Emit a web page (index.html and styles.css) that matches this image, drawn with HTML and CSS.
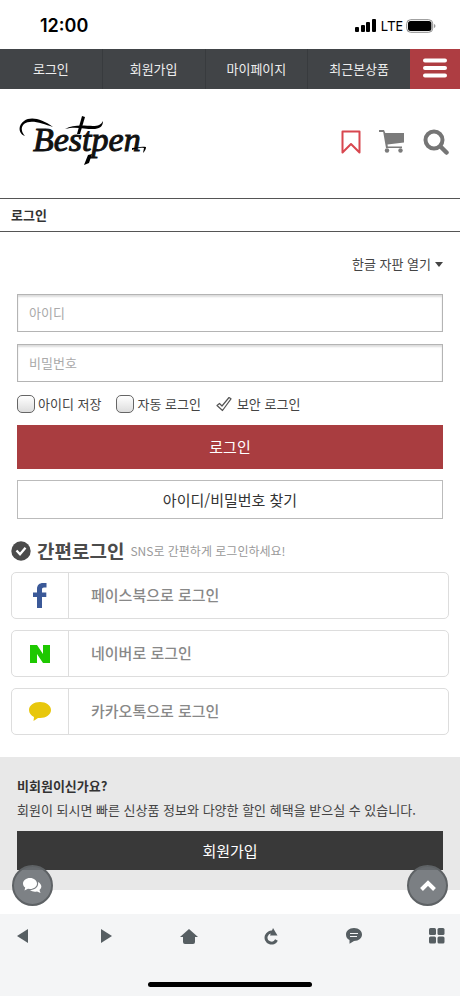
FILE: index.html
```html
<!DOCTYPE html>
<html lang="ko">
<head>
<meta charset="utf-8">
<meta name="viewport" content="width=device-width, initial-scale=1">
<title>로그인</title>
<link rel="stylesheet" href="styles.css">
</head>
<body>
<div class="status">
  <span class="clock">12:00</span>
  <div class="signal">
    <svg width="22" height="14" viewBox="0 0 22 14"><rect x="0" y="8" width="4" height="5" rx="1"/><rect x="6" y="6" width="4" height="7" rx="1"/><rect x="11" y="3" width="4" height="10" rx="1"/><rect x="17" y="0" width="4" height="13" rx="1"/></svg>
    <span>LTE</span>
    <svg width="30" height="14" viewBox="0 0 30 14"><rect x=".7" y=".7" width="26" height="12.600" rx="4" fill="none" stroke="#8c8c8c"/><rect x="2" y="2" width="23.400" height="10" rx="2.500"/><path d="M28 5v4q1.500-.5 1.500-2T28 5z" fill="#999"/></svg>
  </div>
</div>
<nav class="topnav">
  <a href="#">로그인</a><a href="#">회원가입</a><a href="#">마이페이지</a><a href="#">최근본상품</a>
  <button class="menu" aria-label="메뉴"><svg width="24" height="20" viewBox="0 0 24 20"><path d="M2 2.500h20M2 10h20M2 17.500h20" stroke="#fff" stroke-width="4" stroke-linecap="round"/></svg></button>
</nav>
<header class="header">
  <a class="logo" href="#" aria-label="Bestpen">
    <svg width="130" height="54" viewBox="0 0 130 54">
      <text x="15" y="36" class="logo-text">Bestpen</text>
      <path d="M7 21C1 19-1 11 6 6c7-5 18-2 29 6C24 8 12 4 6 9c-4 4-2 9 1 12z"/>
      <path d="M47 14c9-5 20-3 28-3 5 0 8-1 10-5 0 6-4 8-10 8-9 0-18-3-28 0z"/>
      <path d="M64 1l3 1-5 17h-3z"/>
      <path d="M70 40l4-1-3 9-5 2z"/>
      <path d="M114 35c4-1 7-3 12-2l-1 5c2-2 3-4 3-6-6-1-9 1-14 1z"/>
    </svg>
  </a>
  <div class="tools">
    <a href="#" aria-label="찜"><svg width="20" height="24" viewBox="0 0 20 24"><path d="M1.500 1.500h17v21L10 14l-8.500 8.500z" fill="none" stroke="#d8474f" stroke-width="2" stroke-linejoin="round"/></svg></a>
    <a href="#" aria-label="장바구니"><svg width="26" height="23" viewBox="0 0 26 23" fill="#7b7b7b"><path d="M0 0h5l1.300 3H25v9.500L8.500 14.500l.3 2H23V18H7L4.200 2H0z"/><circle cx="8" cy="20.500" r="2.200"/><circle cx="21.500" cy="20.500" r="2.200"/></svg></a>
    <a href="#" aria-label="검색"><svg width="26" height="26" viewBox="0 0 26 26" fill="none" stroke="#757575"><circle cx="11" cy="11" r="8.500" stroke-width="4"/><path d="M17.500 17.500l6 6" stroke-width="4.500" stroke-linecap="round"/></svg></a>
  </div>
</header>
<h1 class="title">로그인</h1>
<main>
  <form class="login">
    <a class="keyboard" href="#">한글 자판 열기<svg width="8" height="5" viewBox="0 0 8 5"><path d="M0 0h8L4 5z" fill="#444"/></svg></a>
    <input class="field" type="text" placeholder="아이디" aria-label="아이디">
    <input class="field" type="password" placeholder="비밀번호" aria-label="비밀번호">
    <div class="options">
      <label><input type="checkbox">아이디 저장</label>
      <label><input type="checkbox">자동 로그인</label>
      <label class="secure"><input type="checkbox" checked><svg width="16" height="16" viewBox="0 0 16 16"><path d="M1 9.500l2.500-2L6 10l7-8.500 2 1.300L6.500 14.500z" fill="#fff" stroke="#555" stroke-width="1.200" stroke-linejoin="round"/></svg>보안 로그인</label>
    </div>
    <button class="btn primary" type="submit">로그인</button>
    <button class="btn find" type="button">아이디/비밀번호 찾기</button>
  </form>
  <section class="sns">
    <div class="sns-head">
      <svg width="20" height="20" viewBox="0 0 20 20"><circle cx="10" cy="10" r="9.700" fill="#4b4b4b"/><path d="M5.500 9.500l3.500 3.800 5.500-6.500" fill="none" stroke="#fff" stroke-width="2.300"/></svg>
      <h2>간편로그인</h2><p>SNS로 간편하게 로그인하세요!</p>
    </div>
    <a class="card" href="#"><span class="brand"><svg width="14" height="25" viewBox="0 0 14 25"><path d="M4 25V14H0V9.500h4V6c0-4 2.500-6 6-6h3.500v4.500H11c-1.500 0-2 .8-2 2v3h4.300V14H9v11z" fill="#3b5998"/></svg></span><span class="name">페이스북으로 로그인</span></a>
    <a class="card" href="#"><span class="brand"><svg width="20" height="18" viewBox="0 0 20 18"><path d="M0 0h7l6 9V0h7v18h-7L7 9v9H0z" fill="#1ec800"/></svg></span><span class="name">네이버로 로그인</span></a>
    <a class="card" href="#"><span class="brand"><svg width="22" height="19" viewBox="0 0 22 19"><path d="M11 0c6 0 11 3.500 11 8s-5 8-11 8l-2-.1L4.500 19l.5-4C2 13.500 0 11 0 8c0-4.500 5-8 11-8z" fill="#e8c70c"/></svg></span><span class="name">카카오톡으로 로그인</span></a>
  </section>
  <section class="join">
    <h3>비회원이신가요?</h3>
    <p>회원이 되시면 빠른 신상품 정보와 다양한 할인 혜택을 받으실 수 있습니다.</p>
    <button class="btn dark">회원가입</button>
  </section>
</main>
<footer class="bottom">
  <button class="float chat" aria-label="상담"><svg width="19" height="16" viewBox="0 0 19 16"><path d="M15 4c3 1.500 5 5 1.500 8l1 3-3.500-1.500c-3 .5-5 0-7-1.500C12 12 16 9 15 4z" fill="#fff"/><path d="M7 0c4 0 7 2.500 7 5.500S11 11 7 11l-2-.2L1.500 12.500l.7-3C.7 8.500 0 7 0 5.500 0 2.500 3 0 7 0z" fill="#fff"/></svg></button>
  <button class="float up" aria-label="위로"><svg width="18" height="13" viewBox="0 0 18 13"><path d="M2.500 10.500L9 4l6.500 6.500" fill="none" stroke="#fff" stroke-width="4"/></svg></button>
  <div class="toolbar">
    <button aria-label="뒤로"><svg width="12" height="14" viewBox="0 0 12 14"><path d="M11 0v14L0 7z"/></svg></button>
    <button aria-label="앞으로"><svg width="12" height="14" viewBox="0 0 12 14"><path d="M1 0v14l11-7z"/></svg></button>
    <button aria-label="홈"><svg width="18" height="15" viewBox="0 0 18 15"><path d="M9 0l9 8h-3v5q0 2-2 2H5q-2 0-2-2V8H0z"/></svg></button>
    <button aria-label="새로고침"><svg width="16" height="17" viewBox="0 0 16 17"><path d="M10 4.300A5.500 5.500 0 1 0 13.500 12" fill="none" stroke="#565e62" stroke-width="3"/><path d="M10 0l4.500 7.500H7z"/></svg></button>
    <button aria-label="대화"><svg width="16" height="16" viewBox="0 0 16 16"><path d="M8 0c5 0 8 3 8 6.500S13 13 8 13l-4.500 2.700V12C1 11 0 9 0 6.500 0 3 3 0 8 0z"/><path d="M4 5.500h8M4 8.500h7" stroke="#f4f5f6" stroke-width="1.200"/></svg></button>
    <button aria-label="전체 탭"><svg width="16" height="16" viewBox="0 0 16 16"><rect width="7" height="7" rx="1.500"/><rect x="8.500" width="7" height="7" rx="1.500"/><rect y="8.500" width="7" height="7" rx="1.500"/><rect x="8.500" y="8.500" width="7" height="7" rx="1.500"/></svg></button>
  </div>
  <div class="home-bar"></div>
</footer>
</body>
</html>
```
FILE: styles.css
```css
* { box-sizing: border-box; }
body { margin: 0; background: #fff; color: #444; font: 13px/20px "Noto Sans CJK KR", sans-serif; }
a { color: inherit; text-decoration: none; }
h1, h2, h3, p { margin: 0; }
svg { display: block; flex: none; }
button { font-family: inherit; padding: 0; border: 0; cursor: pointer; }

.status { height: 49px; padding: 2px 24px 0 40px; display: flex; align-items: center; justify-content: space-between; color: #000; }
.clock { font: 600 18px/24px Inter, sans-serif; }
.signal { display: flex; align-items: center; gap: 3px; font: 14px/20px "Noto Sans", sans-serif; }

.topnav { display: flex; height: 40px; background: #414447; color: #eee; }
.topnav a { flex: 1; display: flex; align-items: center; justify-content: center; border-right: 1px solid #383b3e; }
.topnav a:nth-of-type(4) { border: 0; }
.menu { width: 50px; background: #ae3d42; display: flex; justify-content: center; padding-top: 9px; }

.header { height: 109px; padding: 0 11px 4px 18px; display: flex; align-items: center; justify-content: space-between; }
.logo-text { font: italic 34px "Liberation Serif", serif; fill: #111; stroke: #111; stroke-width: 1px; }
.tools { display: flex; align-items: center; gap: 18px; }

.title { border: solid #555; border-width: 1px 0; padding: 6px 11px; font-size: 13px; line-height: 20px; color: #333; }

.login { padding: 22px 17px 0; display: flex; flex-direction: column; }
.keyboard { align-self: flex-end; display: flex; align-items: center; gap: 4px; margin-bottom: 20px; }
.field { width: 100%; height: 38px; margin: 0 0 12px; padding: 0 11px 2px; border: 1px solid #b4b4b4; border-radius: 0; background: #fff; box-shadow: inset 0 2px 2px #ddd; font: inherit; color: #333; }
.field::placeholder { color: #aaa; opacity: 1; }
.options { display: flex; gap: 15px; height: 19px; align-items: center; margin-bottom: 12px; }
.options label { display: flex; align-items: center; gap: 3px; }
.options input { appearance: none; width: 18px; height: 18px; margin: 0; border: 1px solid #666; border-radius: 5px; background: linear-gradient(#fff, #ddd); }
.options .secure { gap: 5px; }
.options .secure input { position: absolute; opacity: 0; }
.btn { width: 100%; height: 39px; display: block; font-size: 15px; line-height: 22px; }
.primary { height: 44px; background: #a93d40; color: #fff; margin-bottom: 11px; }
.find { border: 1px solid #bbb; background: #fff; color: #333; }

.sns { padding: 20px 11px 22px; }
.sns-head { display: flex; align-items: center; height: 24px; margin-bottom: 9px; }
.sns-head h2 { font-size: 19px; line-height: 24px; margin: 0 6px; color: #4b4b4b; }
.sns-head p { font-size: 12px; color: #999; }
.card { display: flex; height: 47px; border: 1px solid #ddd; border-radius: 5px; margin-bottom: 11px; }
.card:last-child { margin: 0; }
.brand { width: 57px; border-right: 1px solid #ddd; display: flex; align-items: center; justify-content: center; }
.name { padding-left: 22px; font-size: 15px; font-weight: 500; line-height: 43px; color: #888; }

.join { background: #e8e8e8; padding: 19px 17px 20px; }
.join h3 { font-size: 13px; line-height: 20px; color: #333; margin-bottom: 4px; }
.join p { line-height: 20px; margin-bottom: 11px; white-space: nowrap; }
.dark { background: #393939; color: #fff; }

.bottom { position: relative; margin-top: 24px; background: #f4f5f6; padding: 13px 14px 9px; }
.toolbar { display: flex; justify-content: space-between; }
.toolbar button { width: 18px; height: 18px; display: flex; align-items: center; justify-content: center; background: none; }
.toolbar svg { fill: #565e62; }
.home-bar { width: 164px; height: 5px; border-radius: 3px; background: #000; margin: 37px auto 0; }
.float { position: absolute; top: -49px; width: 41px; height: 41px; border-radius: 50%; border: 2px solid #5e6265; background: rgba(107, 112, 116, .88); display: flex; align-items: center; justify-content: center; }
.chat { left: 12px; }
.up { right: 12px; }
```
